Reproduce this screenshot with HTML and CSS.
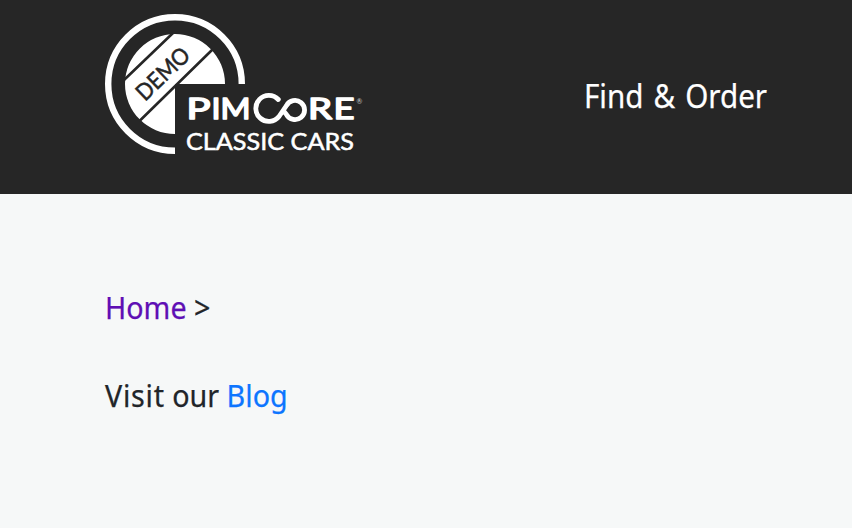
FILE: index.html
```html
<!DOCTYPE html>
<html lang="en">
<head>
<meta charset="utf-8">
<title>Pimcore Classic Cars</title>
<link rel="stylesheet" href="styles.css">
</head>
<body>
<header class="header">
  <a class="logo">
    <svg width="260" height="144" viewBox="105 12 260 144" role="img" aria-label="Pimcore Classic Cars">
      <path class="ring" d="M241.8 84A66.8 66.8 0 1 0 175 150.800"/>
      <path class="disc" d="M175 84H225A50 50 0 1 0 175 134Z"/>
      <path class="cut" d="M124 80L173 33M139.500 121L213 49"/>
      <text class="demo" transform="translate(145 102) rotate(-44)" textLength="65" lengthAdjust="spacingAndGlyphs">DEMO</text>
      <g class="brand">
        <text x="186.500" y="118.500" textLength="24" lengthAdjust="spacingAndGlyphs">P</text>
        <text x="211.500" y="118.500" textLength="9" lengthAdjust="spacingAndGlyphs">I</text>
        <text x="220.500" y="118.500" textLength="30" lengthAdjust="spacingAndGlyphs">M</text>
        <text x="308" y="118.500" textLength="24" lengthAdjust="spacingAndGlyphs">R</text>
        <text x="333.500" y="118.500" textLength="21" lengthAdjust="spacingAndGlyphs">E</text>
      </g>
      <path class="loop" d="M278.300 99.500A13 13 0 1 0 279 116.500L286.500 105.500A9.600 9.600 0 1 1 286.500 114.500L284 111.500"/>
      <text class="reg" x="356.500" y="104">®</text>
      <text class="sub" x="186" y="150" textLength="168" lengthAdjust="spacingAndGlyphs">CLASSIC CARS</text>
    </svg>
  </a>
  <nav class="nav"><a class="nav-link">Find &amp; Order</a></nav>
</header>
<main class="content">
  <p class="line crumbs"><a class="visited">Home</a> &gt;</p>
  <p class="line visit"><span class="spaced">Visit</span> our <a class="link">Blog</a></p>
</main>
</body>
</html>
```

FILE: styles.css
```css
* { box-sizing: border-box; }
body { margin: 0; background: #f6f8f8; color: #212529; font-family: "Noto Sans", sans-serif; -webkit-text-stroke: .25px; }
.header { height: 194px; padding: 12px 0 0 105px; background: #262626; display: flex; align-items: flex-start; }
.logo { width: 260px; height: 144px; -webkit-text-stroke: 0; }
.logo svg { display: block; }
.ring { fill: none; stroke: #fff; stroke-width: 6.4; }
.disc { fill: #fff; }
.cut { fill: none; stroke: #262626; stroke-width: 2.6; }
.demo { font: 400 23px Lato, sans-serif; fill: #262626; stroke: #262626; stroke-width: .5; }
.brand { font: 400 28px Lato, sans-serif; fill: #fff; stroke: #fff; stroke-width: 1.5; stroke-linejoin: round; }
.loop { fill: none; stroke: #fff; stroke-width: 4.8; stroke-linecap: round; stroke-linejoin: round; }
.reg { font: 7px Lato, sans-serif; fill: #ccc; }
.sub { font: 400 22.5px Lato, sans-serif; fill: #fff; stroke: #fff; stroke-width: .5; }
.nav { margin: 60px 0 0 219px; font-size: 32px; line-height: 48px; color: #fff; white-space: nowrap; word-spacing: 2.5px; transform: scaleX(.925); transform-origin: left; }
.content { padding: 89px 105px 0; }
.line { margin: 0 0 40px; font-size: 31px; line-height: 48px; transform: scaleX(.925); transform-origin: left; }
.spaced { letter-spacing: .8px; }
.visited { color: #5f0fb4; }
.link { color: #0d75ff; }
```
